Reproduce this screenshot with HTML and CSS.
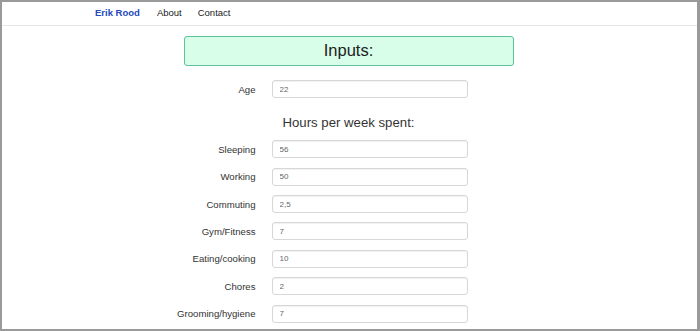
FILE: index.html
```html
<!DOCTYPE html>
<html lang="en">
<head>
<meta charset="UTF-8">
<title>Erik Rood</title>
<link rel="stylesheet" href="styles.css">
</head>
<body>
<div class="frame">
  <nav class="navbar">
    <a class="brand" href="#">Erik Rood</a>
    <a class="nav-link" href="#">About</a>
    <a class="nav-link" href="#">Contact</a>
  </nav>

  <div class="content">
    <div class="banner">Inputs:</div>

    <form class="inputs">
      <div class="row">
        <label for="age">Age</label>
        <input id="age" type="text" value="22">
      </div>

      <h2 class="section-title">Hours per week spent:</h2>

      <div class="row">
        <label for="sleeping">Sleeping</label>
        <input id="sleeping" type="text" value="56">
      </div>
      <div class="row">
        <label for="working">Working</label>
        <input id="working" type="text" value="50">
      </div>
      <div class="row">
        <label for="commuting">Commuting</label>
        <input id="commuting" type="text" value="2,5">
      </div>
      <div class="row">
        <label for="gym">Gym/Fitness</label>
        <input id="gym" type="text" value="7">
      </div>
      <div class="row">
        <label for="eating">Eating/cooking</label>
        <input id="eating" type="text" value="10">
      </div>
      <div class="row">
        <label for="chores">Chores</label>
        <input id="chores" type="text" value="2">
      </div>
      <div class="row">
        <label for="grooming">Grooming/hygiene</label>
        <input id="grooming" type="text" value="7">
      </div>
    </form>
  </div>
</div>
</body>
</html>
```

FILE: styles.css
```css
* {
	box-sizing: border-box;
}

body {
	margin: 0;
	font-family: "Liberation Sans", Arial, sans-serif;
	color: #333;
	background: #fff;
}

.frame {
	height: 331px;
	overflow: hidden;
	border: 2px solid #9a9a9a;
	border-right-width: 3px;
}

.navbar {
	display: flex;
	align-items: center;
	gap: 16px;
	height: 24px;
	padding: 0 0 3px 93px;
	border-bottom: 1px solid #e6e6e6;
	font-size: 9.5px;
}

.navbar a {
	text-decoration: none;
	color: #222;
}

.navbar .brand {
	color: #2349bd;
	font-weight: bold;
	margin-right: 1px;
}

.content {
	width: 330px;
	margin: 0 auto;
	padding-top: 10px;
	position: relative;
	left: -1px;
}

.banner {
	height: 30px;
	line-height: 27px;
	text-align: center;
	font-size: 16.5px;
	color: #222;
	background: #d8fde9;
	border: 1.5px solid #5dc39b;
	border-radius: 3px;
}

.inputs {
	width: 319px;
	margin: 0 0 0 -35px;
	padding-top: 14px;
}

.row {
	display: grid;
	grid-template-columns: 107px 196px;
	column-gap: 16px;
	align-items: center;
	margin-bottom: 9.4px;
}

.row label {
	text-align: right;
	font-size: 9.6px;
	color: #333;
}

.row input {
	height: 18px;
	padding: 0 7px;
	font: 8px "Liberation Sans", Arial, sans-serif;
	color: #666;
	border: 1px solid #d7d7d7;
	border-radius: 3px;
	box-shadow: inset 0 1px 1px rgba(0, 0, 0, 0.06);
	outline: none;
}

.section-title {
	width: 330px;
	margin: 16.5px 0 10.8px 35px;
	font-size: 13.2px;
	line-height: 15px;
	font-weight: normal;
	text-align: center;
	color: #333;
}
```
